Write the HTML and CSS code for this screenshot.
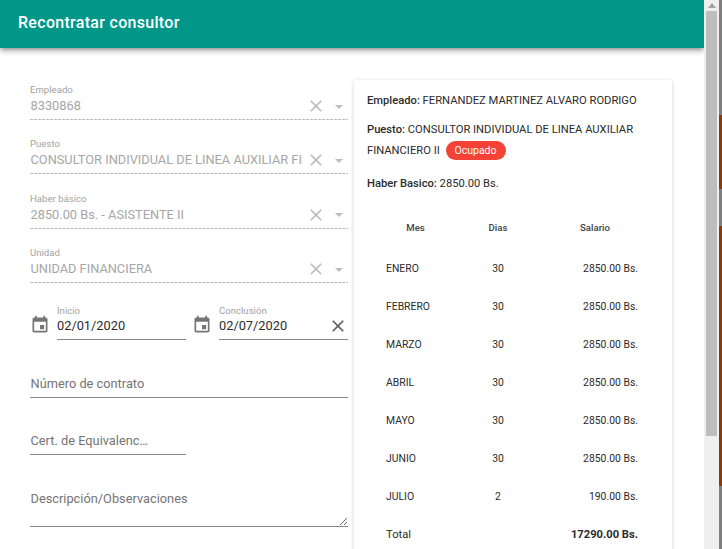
FILE: index.html
```html
<!DOCTYPE html>
<html lang="es">
<head>
  <meta charset="UTF-8">
  <meta name="viewport" content="width=device-width, initial-scale=1.0">
  <title>Recontratar consultor</title>
  <link rel="stylesheet" href="styles.css">
</head>
<body>

  <div class="page">
    <div class="dialog">
      <div class="toolbar">Recontratar consultor</div>

      <div class="content">
        <div class="form">
          <div class="field disabled">
            <div class="label">Empleado</div>
            <div class="row">
              <div class="value">8330868</div>
              <svg class="clear" viewBox="0 0 24 24"><path d="M19 6.41L17.59 5 12 10.59 6.41 5 5 6.41 10.59 12 5 17.59 6.41 19 12 13.41 17.59 19 19 17.59 13.41 12z"/></svg>
              <span class="arrow"></span>
            </div>
          </div>
          <div class="field disabled">
            <div class="label">Puesto</div>
            <div class="row">
              <div class="value">CONSULTOR INDIVIDUAL DE LINEA AUXILIAR FINANCIERO II</div>
              <svg class="clear" viewBox="0 0 24 24"><path d="M19 6.41L17.59 5 12 10.59 6.41 5 5 6.41 10.59 12 5 17.59 6.41 19 12 13.41 17.59 19 19 17.59 13.41 12z"/></svg>
              <span class="arrow"></span>
            </div>
          </div>
          <div class="field disabled">
            <div class="label">Haber básico</div>
            <div class="row">
              <div class="value">2850.00 Bs. - ASISTENTE II</div>
              <svg class="clear" viewBox="0 0 24 24"><path d="M19 6.41L17.59 5 12 10.59 6.41 5 5 6.41 10.59 12 5 17.59 6.41 19 12 13.41 17.59 19 19 17.59 13.41 12z"/></svg>
              <span class="arrow"></span>
            </div>
          </div>
          <div class="field disabled">
            <div class="label">Unidad</div>
            <div class="row">
              <div class="value">UNIDAD FINANCIERA</div>
              <svg class="clear" viewBox="0 0 24 24"><path d="M19 6.41L17.59 5 12 10.59 6.41 5 5 6.41 10.59 12 5 17.59 6.41 19 12 13.41 17.59 19 19 17.59 13.41 12z"/></svg>
              <span class="arrow"></span>
            </div>
          </div>

          <div class="dates">
            <div class="date">
              <svg class="calendar" viewBox="0 0 24 24"><path d="M17 12h-5v5h5v-5zM16 1v2H8V1H6v2H5c-1.11 0-1.99.9-1.99 2L3 19c0 1.1.89 2 2 2h14c1.1 0 2-.9 2-2V5c0-1.1-.9-2-2-2h-1V1h-2zm3 18H5V8h14v11z"/></svg>
              <div class="field date-field">
                <div class="label">Inicio</div>
                <div class="row">
                  <div class="value">02/01/2020</div>
                </div>
              </div>
            </div>
            <div class="date">
              <svg class="calendar" viewBox="0 0 24 24"><path d="M17 12h-5v5h5v-5zM16 1v2H8V1H6v2H5c-1.11 0-1.99.9-1.99 2L3 19c0 1.1.89 2 2 2h14c1.1 0 2-.9 2-2V5c0-1.1-.9-2-2-2h-1V1h-2zm3 18H5V8h14v11z"/></svg>
              <div class="field date-field">
                <div class="label">Conclusión</div>
                <div class="row">
                  <div class="value">02/07/2020</div>
                  <svg class="clear" viewBox="0 0 24 24"><path d="M19 6.41L17.59 5 12 10.59 6.41 5 5 6.41 10.59 12 5 17.59 6.41 19 12 13.41 17.59 19 19 17.59 13.41 12z"/></svg>
                </div>
              </div>
            </div>
          </div>

          <div class="plain contrato">Número de contrato</div>
          <div class="plain cert">Cert. de Equivalenc…</div>
          <textarea class="obs" placeholder="Descripción/Observaciones"></textarea>
        </div>

        <div class="card">
          <p class="line"><b>Empleado:</b> FERNANDEZ MARTINEZ ALVARO RODRIGO</p>
          <p class="line tall"><b>Puesto:</b> CONSULTOR INDIVIDUAL DE LINEA AUXILIAR FINANCIERO II <span class="badge">Ocupado</span></p>
          <p class="line"><b>Haber Basico:</b> 2850.00 Bs.</p>

          <table class="salaries">
            <colgroup>
              <col class="col-mes">
              <col class="col-dias">
              <col class="col-salario">
            </colgroup>
            <thead>
              <tr><th>Mes</th><th>Dias</th><th>Salario</th></tr>
            </thead>
            <tbody>
              <tr><td>ENERO</td><td>30</td><td>2850.00 Bs.</td></tr>
              <tr><td>FEBRERO</td><td>30</td><td>2850.00 Bs.</td></tr>
              <tr><td>MARZO</td><td>30</td><td>2850.00 Bs.</td></tr>
              <tr><td>ABRIL</td><td>30</td><td>2850.00 Bs.</td></tr>
              <tr><td>MAYO</td><td>30</td><td>2850.00 Bs.</td></tr>
              <tr><td>JUNIO</td><td>30</td><td>2850.00 Bs.</td></tr>
              <tr><td>JULIO</td><td>2</td><td>190.00 Bs.</td></tr>
              <tr class="total"><td>Total</td><td></td><td>17290.00 Bs.</td></tr>
            </tbody>
          </table>
        </div>
      </div>
    </div>

    <div class="scrollbar">
      <span class="scroll-up"></span>
      <div class="thumb"></div>
    </div>
    <div class="backdrop"></div>
  </div>

</body>
</html>
```

FILE: styles.css
```css
html, body {
  margin: 0;
  height: 100%;
  overflow: hidden;
}

body {
  font-family: Roboto, sans-serif;
  color: #2b2b2b;
  background-color: #fff;
}

.page {
  display: flex;
  height: 549px;
}

.dialog {
  flex: 1;
  min-width: 0;
  overflow: hidden;
}

.toolbar {
  position: relative;
  height: 48px;
  padding-left: 18px;
  line-height: 45px;
  font-size: 16px;
  font-weight: 500;
  letter-spacing: 0.3px;
  color: #fff;
  background-color: #009688;
  box-shadow: 0 2px 4px -1px rgba(0, 0, 0, 0.3), 0 4px 5px 0 rgba(0, 0, 0, 0.14), 0 1px 10px 0 rgba(0, 0, 0, 0.1);
}

.content {
  display: flex;
  gap: 6px;
  padding: 32px 32px 0 30px;
}

.form {
  width: 318px;
  flex-shrink: 0;
  padding-top: 4px;
}

/* form fields */
.field {
  height: 36px;
  margin-bottom: 18.4px;
  box-sizing: border-box;
  border-bottom: 1px solid #8a8a8a;
}

.field.disabled {
  border-bottom: none;
  background-image: linear-gradient(to right, #bcbcbc 0, #bcbcbc 75%, transparent 75%);
  background-size: 4px 1px;
  background-repeat: repeat-x;
  background-position: bottom left;
}

.label {
  font-size: 9.6px;
  line-height: 12px;
  color: #a3a3a3;
  margin-bottom: 2px;
}

.row {
  display: flex;
  align-items: center;
  height: 16px;
}

.value {
  flex: 1;
  min-width: 0;
  overflow: hidden;
  white-space: nowrap;
  font-size: 12.8px;
  line-height: 16px;
}

.disabled .value {
  flex: none;
  box-sizing: border-box;
  width: 273px;
  padding-left: 0.5px;
  color: #a6a6a6;
}

.clear {
  width: 20px;
  height: 20px;
  flex-shrink: 0;
  margin-left: 3px;
  fill: #616161;
}

.disabled .clear {
  fill: #bdbdbd;
}

.arrow {
  width: 0;
  height: 0;
  margin-left: 9px;
  margin-top: 1px;
  border-left: 4px solid transparent;
  border-right: 4px solid transparent;
  border-top: 4px solid #bdbdbd;
}

/* date row */
.dates {
  display: flex;
  gap: 6px;
  margin-top: 22px;
}

.date {
  flex: 1;
  display: flex;
  align-items: flex-end;
}

.calendar {
  width: 20px;
  height: 20px;
  flex-shrink: 0;
  margin: 0 5px 5px 0;
  fill: #757575;
}

.date-field {
  flex: 1;
  min-width: 0;
  height: 35px;
  margin: 0 0 0 2px;
}

.date-field .label {
  margin-bottom: 1px;
}

.date-field .clear {
  margin: 0;
}

.plain {
  box-sizing: border-box;
  height: 26px;
  padding-left: 0.5px;
  font-size: 12.8px;
  line-height: 24px;
  color: #757575;
  border-bottom: 1px solid #8a8a8a;
}

.contrato {
  margin-top: 32px;
}

.cert {
  width: 156px;
  margin-top: 31px;
}

.obs {
  display: block;
  box-sizing: border-box;
  width: 100%;
  height: 37px;
  margin: 35px 0 0;
  padding: 0.5px 0 0 0.5px;
  font-family: inherit;
  font-size: 12.8px;
  line-height: 16px;
  background: none;
  border: none;
  border-bottom: 1px solid #8a8a8a;
  border-radius: 0;
  outline: none;
}

.obs::placeholder {
  color: #757575;
  opacity: 1;
}

/* right card */
.card {
  width: 318px;
  flex-shrink: 0;
  box-sizing: border-box;
  padding: 13px;
  height: 600px;
  border-radius: 2px;
  box-shadow: 0 1px 4px rgba(0, 0, 0, 0.2);
}

.line {
  margin: 0 0 10.5px;
  font-size: 11.2px;
  line-height: 15px;
}

.line.tall {
  line-height: 21px;
  margin-bottom: 15.5px;
}

.line b {
  font-weight: 500;
}

.badge {
  display: inline-block;
  margin-left: 3px;
  padding: 0 9px;
  height: 19px;
  line-height: 19px;
  font-size: 10.5px;
  color: #fff;
  background-color: #f44336;
  border-radius: 10px;
}

.salaries {
  table-layout: fixed;
  width: 290px;
  margin-top: 14.5px;
  border-collapse: collapse;
  font-size: 10.4px;
}

.col-mes { width: 96px; }
.col-dias { width: 70px; }
.col-salario { width: 124px; }

.salaries th {
  height: 44px;
  padding: 0;
  font-size: 9.6px;
  font-weight: 500;
  color: #424242;
  text-align: center;
}

.salaries th:first-child {
  padding-left: 1px;
}

.salaries td {
  height: 38px;
  padding: 0;
  text-align: center;
}

.salaries td:first-child {
  text-align: left;
  padding-left: 19px;
}

.salaries td:last-child {
  text-align: right;
  padding-right: 19px;
}

.total td {
  font-size: 11.2px;
}

.total td:last-child {
  font-weight: 700;
}

/* scrollbar and the page behind the dialog */
.scrollbar {
  width: 15px;
  flex-shrink: 0;
  background-color: #efefef;
}

.scroll-up {
  display: block;
  width: 0;
  height: 0;
  margin: 3px auto 3px;
  border-left: 4px solid transparent;
  border-right: 4px solid transparent;
  border-bottom: 5px solid #a3a3a3;
}

.thumb {
  width: 11px;
  height: 425px;
  margin: 0 auto;
  background-color: #bdbdbd;
}

.backdrop {
  width: 3px;
  flex-shrink: 0;
  background-image: linear-gradient(to bottom,
    #7f7f7f 0, #7f7f7f 115px,
    #843c0c 115px, #843c0c 189px,
    #7f7f7f 189px, #7f7f7f 226px,
    #843c0c 226px, #843c0c 486px,
    #7f7f7f 486px);
}
```
